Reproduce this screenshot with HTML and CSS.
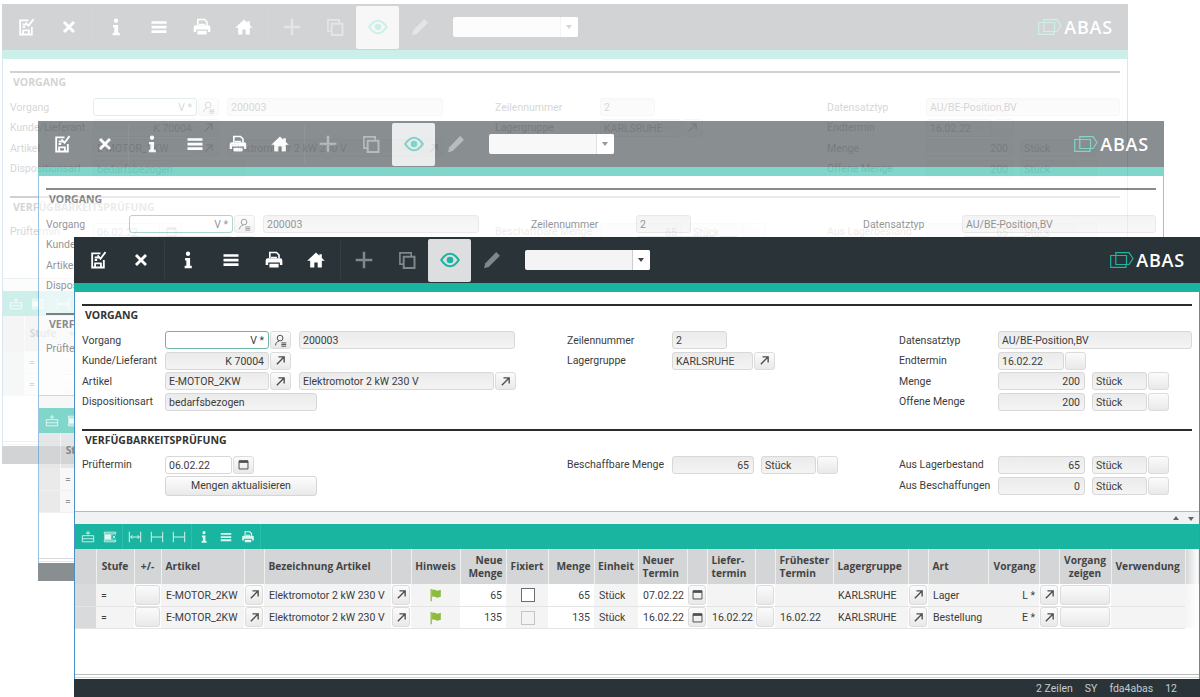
FILE: index.html
```html
<!DOCTYPE html>
<html lang="de">
<head>
  <meta charset="UTF-8">
  <meta name="viewport" content="width=device-width, initial-scale=1.0">
  <title>ABAS Verfügbarkeitsprüfung</title>
  <link rel="stylesheet" href="styles.css">
</head>
<body>
  <svg class="symbole" aria-hidden="true">
    <symbol id="i-speichern" viewBox="0 0 24 24"><path d="M15 4H5v17h14v-9M8.500 21v-5h7v5M8 9h5M8 12h3" fill="none" stroke="currentColor" stroke-width="2.200"/><path d="M11.500 6.500l3.500 4 6-8" fill="none" stroke="currentColor" stroke-width="2.200"/></symbol>
    <symbol id="i-x" viewBox="0 0 24 24"><path d="M6 6l12 12M18 6L6 18" stroke="currentColor" stroke-width="3.400" fill="none"/></symbol>
    <symbol id="i-info" viewBox="0 0 24 24"><circle cx="12" cy="4.500" r="2.600" fill="currentColor"/><path d="M8.500 9.500H14.500V19H16.500V22H8V19H10V12.500H8.500Z" fill="currentColor"/></symbol>
    <symbol id="i-liste" viewBox="0 0 24 24"><path d="M3 5h18v3.200H3zM3 10.500h18v3.200H3zM3 16h18v3.200H3z" fill="currentColor"/></symbol>
    <symbol id="i-druck" viewBox="0 0 24 24"><path d="M7 10V3h8l3 3v4M8.500 9h7" fill="none" stroke="currentColor" stroke-width="2"/><path d="M4.500 10h15a2.500 2.500 0 0 1 2.500 2.500V18h-3v-3H5v3H2v-5.500A2.500 2.500 0 0 1 4.500 10zM6.500 16.500h11V21h-11z" fill="currentColor"/></symbol>
    <symbol id="i-haus" viewBox="0 0 24 24"><path d="M12 3L1.500 13H5v8h5v-6h4v6h5v-8h3.500L19 9.700V5h-3v1.900z" fill="currentColor"/></symbol>
    <symbol id="i-plus" viewBox="0 0 24 24"><path d="M12 2v20M2 12h20" stroke="currentColor" stroke-width="3" fill="none"/></symbol>
    <symbol id="i-kopie" viewBox="0 0 24 24"><path d="M8 17H3.500V3.500H17V8" fill="none" stroke="currentColor" stroke-width="2"/><path d="M8 8h13v13.500H8z" fill="none" stroke="currentColor" stroke-width="2.400"/></symbol>
    <symbol id="i-auge" viewBox="0 0 24 24"><path d="M1.500 12C5 6.500 8.500 4.500 12 4.500s7 2 10.500 7.500C19 17.500 15.500 19.500 12 19.500S5 17.500 1.500 12z" fill="none" stroke="currentColor" stroke-width="2.600"/><circle cx="12" cy="12" r="4" fill="currentColor"/></symbol>
    <symbol id="i-stift" viewBox="0 0 24 24"><path d="M17 2.500l4.500 4.500L8 20.500 2.500 22 4 16z" fill="currentColor"/></symbol>
    <symbol id="i-logo" viewBox="0 0 24 16"><path d="M5.800 3.500H.7V15.300H16V12.500M5.800 3.500H16.500V12.500H5.800ZM5.800 3.500V.7H19L23 6.500 19 12.500H16.500" fill="none" stroke="currentColor" stroke-width="1.200"/></symbol>
    <symbol id="i-pfeil" viewBox="0 0 16 16"><path d="M3.500 12.500L12 4M5.500 3.500h7v7" fill="none" stroke="currentColor" stroke-width="1.700"/></symbol>
    <symbol id="i-suche" viewBox="0 0 16 16"><circle cx="7.500" cy="5" r="3.500" fill="none" stroke="currentColor" stroke-width="1.200"/><path d="M2 14c0-3 1.500-4.500 4-5M9 11h6M9 13h6M9 15h6" fill="none" stroke="currentColor" stroke-width="1.200"/></symbol>
    <symbol id="i-kalender" viewBox="0 0 16 16"><path d="M2.500 3.500h11v10h-11z" fill="none" stroke="currentColor" stroke-width="1.200"/><path d="M2.500 3h11v3h-11z" fill="currentColor"/></symbol>
    <symbol id="i-flagge" viewBox="0 0 16 16"><path d="M2.500 1v14" stroke="currentColor" stroke-width="1.500" fill="none"/><path d="M3.500 2c3-1 4.500 1 6 1s2.500-.5 4-1v8c-1.500 .5-2.500 1-4 1s-3-2-6-1z" fill="currentColor"/></symbol>
    <symbol id="i-zeile-neu" viewBox="0 0 16 16"><path d="M1.500 6.500h13v7h-13zM1.500 10h13M8 1v4.500M5.500 3.500h5" fill="none" stroke="currentColor" stroke-width="1"/></symbol>
    <symbol id="i-zeile-weg" viewBox="0 0 16 16"><path d="M1.500 2.500h13v2h-13zM1.500 11.500h13v2h-13z" fill="none" stroke="currentColor" stroke-width="1"/><path d="M1.500 5h8v6h-8z" fill="currentColor"/><path d="M11 6.500l3 3M14 6.500l-3 3" stroke="currentColor" stroke-width="1" fill="none"/></symbol>
    <symbol id="i-breit" viewBox="0 0 16 16"><path d="M1.500 2v12M14.500 2v12M3 8h10M5 6l-2 2 2 2M11 6l2 2-2 2" fill="none" stroke="currentColor" stroke-width="1.100"/></symbol>
    <symbol id="i-spalte" viewBox="0 0 16 16"><path d="M1.500 2v12M14.500 2v12M2 8h12" fill="none" stroke="currentColor" stroke-width="1.100"/></symbol>
  </svg>

  <div class="fenster vorne">
    <header class="kopf">
      <div class="werkzeuge">
        <span class="wz"><svg><use href="#i-speichern"/></svg></span>
        <span class="wz"><svg><use href="#i-x"/></svg></span>
        <span class="trenner"></span>
        <span class="wz"><svg><use href="#i-info"/></svg></span>
        <span class="wz"><svg><use href="#i-liste"/></svg></span>
        <span class="wz"><svg><use href="#i-druck"/></svg></span>
        <span class="wz"><svg><use href="#i-haus"/></svg></span>
        <span class="trenner"></span>
        <span class="wz grau"><svg><use href="#i-plus"/></svg></span>
        <span class="wz grau"><svg><use href="#i-kopie"/></svg></span>
        <span class="wz aktiv"><svg><use href="#i-auge"/></svg></span>
        <span class="wz grau"><svg><use href="#i-stift"/></svg></span>
        <div class="auswahl"><span class="auswahl-pfeil"></span></div>
      </div>
      <div class="logo"><svg><use href="#i-logo"/></svg><span>ABAS</span></div>
    </header>
    <div class="akzent"></div>

    <div class="inhalt">
      <div class="maske">
        <section class="abschnitt erster">
          <h2>VORGANG</h2>
          <div class="spalten">
            <div class="spalte s1">
              <div class="zeile"><label>Vorgang</label><div class="feld aktiv-feld rechts b104">V *</div><span class="knopf"><svg><use href="#i-suche"/></svg></span><div class="feld b216 abstand">200003</div></div>
              <div class="zeile"><label>Kunde/Lieferant</label><div class="feld rechts b104">K 70004</div><span class="knopf"><svg><use href="#i-pfeil"/></svg></span></div>
              <div class="zeile"><label>Artikel</label><div class="feld b104">E-MOTOR_2KW</div><span class="knopf"><svg><use href="#i-pfeil"/></svg></span><div class="feld b195 abstand">Elektromotor 2 kW 230 V</div><span class="knopf"><svg><use href="#i-pfeil"/></svg></span></div>
              <div class="zeile"><label>Dispositionsart</label><div class="feld b152">bedarfsbezogen</div></div>
            </div>
            <div class="spalte s2">
              <div class="zeile"><label>Zeilennummer</label><div class="feld b55">2</div></div>
              <div class="zeile"><label>Lagergruppe</label><div class="feld b81">KARLSRUHE</div><span class="knopf"><svg><use href="#i-pfeil"/></svg></span></div>
            </div>
            <div class="spalte s3">
              <div class="zeile"><label>Datensatztyp</label><div class="feld b194">AU/BE-Position,BV</div></div>
              <div class="zeile"><label>Endtermin</label><div class="feld b66">16.02.22</div><span class="knopf"></span></div>
              <div class="zeile"><label>Menge</label><div class="feld rechts b87">200</div><div class="feld b55 abstand-k">Stück</div><span class="knopf"></span></div>
              <div class="zeile"><label>Offene Menge</label><div class="feld rechts b87">200</div><div class="feld b55 abstand-k">Stück</div><span class="knopf"></span></div>
            </div>
          </div>
        </section>
        <section class="abschnitt pruefung">
          <h2>VERFÜGBARKEITSPRÜFUNG</h2>
          <div class="spalten">
            <div class="spalte s1">
              <div class="zeile"><label>Prüftermin</label><div class="feld weiss b67">06.02.22</div><span class="knopf"><svg><use href="#i-kalender"/></svg></span></div>
              <div class="zeile"><label></label><div class="breit-knopf">Mengen aktualisieren</div></div>
            </div>
            <div class="spalte s2">
              <div class="zeile"><label>Beschaffbare Menge</label><div class="feld rechts b82">65</div><div class="feld b55 abstand-k">Stück</div><span class="knopf"></span></div>
            </div>
            <div class="spalte s3">
              <div class="zeile"><label>Aus Lagerbestand</label><div class="feld rechts b87">65</div><div class="feld b55 abstand-k">Stück</div><span class="knopf"></span></div>
              <div class="zeile"><label>Aus Beschaffungen</label><div class="feld rechts b87">0</div><div class="feld b55 abstand-k">Stück</div><span class="knopf"></span></div>
            </div>
          </div>
        </section>
      </div>

      <div class="leiste"><span class="dreieck hoch"></span><span class="dreieck runter"></span></div>

      <div class="tabellen-werkzeuge">
        <span class="twz"><svg><use href="#i-zeile-neu"/></svg></span>
        <span class="twz"><svg><use href="#i-zeile-weg"/></svg></span>
        <span class="t-trenner"></span>
        <span class="twz"><svg><use href="#i-breit"/></svg></span>
        <span class="twz"><svg><use href="#i-spalte"/></svg></span>
        <span class="twz"><svg><use href="#i-spalte"/></svg></span>
        <span class="t-trenner"></span>
        <span class="twz"><svg><use href="#i-info"/></svg></span>
        <span class="twz"><svg><use href="#i-liste"/></svg></span>
        <span class="twz"><svg><use href="#i-druck"/></svg></span>
        <span class="t-trenner"></span>
      </div>

      <table class="tabelle">
        <colgroup>
          <col style="width:21px"><col style="width:38px"><col style="width:27px"><col style="width:83px"><col style="width:20px"><col style="width:127px"><col style="width:20px"><col style="width:49px"><col style="width:46px"><col style="width:42px"><col style="width:46px"><col style="width:44px"><col style="width:49px"><col style="width:20px"><col style="width:48px"><col style="width:20px"><col style="width:58px"><col style="width:75px"><col style="width:20px"><col style="width:60px"><col style="width:51px"><col style="width:20px"><col style="width:52px"><col style="width:74px"><col>
        </colgroup>
        <thead>
          <tr>
            <th></th><th>Stufe</th><th>+/-</th><th class="li">Artikel</th><th></th><th class="li">Bezeichnung Artikel</th><th></th><th>Hinweis</th><th class="re">Neue<br>Menge</th><th>Fixiert</th><th class="re">Menge</th><th>Einheit</th><th class="li">Neuer<br>Termin</th><th></th><th class="li">Liefer-<br>termin</th><th></th><th class="li">Frühester<br>Termin</th><th class="li">Lagergruppe</th><th></th><th class="li">Art</th><th class="re">Vorgang</th><th></th><th>Vorgang<br>zeigen</th><th class="li">Verwendung</th><th class="rest"></th>
          </tr>
        </thead>
        <tbody>
          <tr>
            <td class="stub"></td><td>=</td><td class="kn"><span class="knopf voll"></span></td><td>E-MOTOR_2KW</td><td class="kn"><span class="knopf voll"><svg><use href="#i-pfeil"/></svg></span></td><td>Elektromotor 2 kW 230 V</td><td class="kn"><span class="knopf voll"><svg><use href="#i-pfeil"/></svg></span></td><td class="mi flagge"><svg><use href="#i-flagge"/></svg></td><td class="re ed">65</td><td class="mi"><span class="haken"></span></td><td class="re ed">65</td><td>Stück</td><td class="ed">07.02.22</td><td class="kn"><span class="knopf voll"><svg><use href="#i-kalender"/></svg></span></td><td></td><td class="kn"><span class="knopf voll"></span></td><td></td><td>KARLSRUHE</td><td class="kn"><span class="knopf voll"><svg><use href="#i-pfeil"/></svg></span></td><td>Lager</td><td class="re">L *</td><td class="kn"><span class="knopf voll"><svg><use href="#i-pfeil"/></svg></span></td><td class="kn"><span class="knopf voll"></span></td><td></td><td class="rest"></td>
          </tr>
          <tr>
            <td class="stub"></td><td>=</td><td class="kn"><span class="knopf voll"></span></td><td>E-MOTOR_2KW</td><td class="kn"><span class="knopf voll"><svg><use href="#i-pfeil"/></svg></span></td><td>Elektromotor 2 kW 230 V</td><td class="kn"><span class="knopf voll"><svg><use href="#i-pfeil"/></svg></span></td><td class="mi flagge"><svg><use href="#i-flagge"/></svg></td><td class="re ed">135</td><td class="mi"><span class="haken aus"></span></td><td class="re ed">135</td><td>Stück</td><td class="ed">16.02.22</td><td class="kn"><span class="knopf voll"><svg><use href="#i-kalender"/></svg></span></td><td>16.02.22</td><td class="kn"><span class="knopf voll"></span></td><td>16.02.22</td><td>KARLSRUHE</td><td class="kn"><span class="knopf voll"><svg><use href="#i-pfeil"/></svg></span></td><td>Bestellung</td><td class="re">E *</td><td class="kn"><span class="knopf voll"><svg><use href="#i-pfeil"/></svg></span></td><td class="kn"><span class="knopf voll"></span></td><td></td><td class="rest"></td>
          </tr>
        </tbody>
      </table>
    </div>

    <footer class="fuss">
      <span>2 Zeilen</span><span>SY</span><span>fda4abas</span><span>12</span>
    </footer>
  </div>

  <script src="script.js"></script>
</body>
</html>
```

FILE: styles.css
```css
/* Desktop */
html, body {
  margin: 0;
  height: 100%;
  overflow: hidden;
  background: #fff;
}

body {
  font-family: Roboto, sans-serif;
  font-size: 10.500px;
  color: #3c3c3c;
}

.symbole {
  display: none;
}

/* Die drei gestapelten Fenster */
.fenster {
  position: absolute;
  width: 1126px;
  height: 460px;
  display: flex;
  flex-direction: column;
  background: #fff;
}

.vorne {
  left: 74px;
  top: 237px;
}

.mitte {
  left: 38px;
  top: 121px;
  opacity: 0.55;
}

.hinten {
  left: 2px;
  top: 4px;
  opacity: 0.21;
}

/* Kopf */
.kopf {
  height: 46px;
  flex: none;
  display: flex;
  align-items: center;
  justify-content: space-between;
  background: #2a3338;
  color: #fff;
}

.werkzeuge {
  display: flex;
  align-items: center;
  height: 100%;
  padding-left: 3px;
}

.wz {
  width: 42.600px;
  height: 43px;
  display: flex;
  align-items: center;
  justify-content: center;
  border-radius: 2px;
}

.wz svg {
  width: 20px;
  height: 20px;
}

.wz.grau {
  color: #7f878b;
}

.wz.aktiv {
  background: #dcdedf;
  color: #1ab5a0;
}

.trenner {
  width: 1px;
  height: 38px;
  margin: 0 2px;
  background: #353e43;
}

.trenner + .wz.grau {
  margin-left: 0.500px;
}

.auswahl {
  width: 125px;
  height: 20px;
  margin-left: 12px;
  display: flex;
  justify-content: flex-end;
  background: #f4f4f4;
  border-radius: 2px;
}

.auswahl-pfeil {
  width: 17px;
  position: relative;
  border-left: 1px solid #ccc;
  background: #fff;
  border-radius: 0 2px 2px 0;
}

.auswahl-pfeil::after {
  content: "";
  position: absolute;
  left: 5px;
  top: 8px;
  border: 3.500px solid transparent;
  border-top: 4px solid #444;
}

.logo {
  display: flex;
  align-items: center;
  gap: 2px;
  padding-right: 15px;
}

.logo svg {
  width: 24px;
  height: 16px;
  color: #1fb5a0;
}

.logo span {
  font-family: 'Open Sans', sans-serif;
  font-size: 18px;
  font-weight: 600;
  letter-spacing: 0.8px;
  line-height: 20px;
}

.akzent {
  height: 9px;
  flex: none;
  background: #1ab5a0;
}

/* Inhalt */
.inhalt {
  position: relative;
  flex: 1;
  min-height: 0;
  display: flex;
  flex-direction: column;
  border-left: 1px solid #4a90c8;
  border-right: 1px solid #4a90c8;
}

.inhalt::after {
  content: "";
  position: absolute;
  left: 0;
  right: 0;
  bottom: 1px;
  height: 2px;
  border-top: 1px solid #b9bdc0;
  border-bottom: 1px solid #d4d7d9;
}

.maske {
  height: 219px;
  flex: none;
  box-sizing: border-box;
  padding: 12px 7px 0;
}

.abschnitt {
  border-top: 2px solid #2c2c2c;
  margin-top: 18px;
}

.abschnitt.erster {
  margin-top: 0;
}

.abschnitt h2 {
  margin: 0 0 7px 3px;
  font-family: 'Open Sans', sans-serif;
  font-size: 10.500px;
  line-height: 18px;
  font-weight: 700;
  color: #333;
}

.spalten {
  display: grid;
  grid-template-columns: 485px 332px 1fr;
}

.spalte {
  display: flex;
  flex-direction: column;
  gap: 2.500px;
}

.pruefung .spalte {
  gap: 3px;
}

.zeile {
  display: flex;
  align-items: center;
  height: 18px;
}

.zeile label {
  flex: none;
  white-space: nowrap;
}

.s1 label { width: 83px; }
.s2 label { width: 105px; }
.s3 label { width: 99px; }

.feld {
  box-sizing: border-box;
  height: 18px;
  line-height: 17px;
  padding: 0 3px;
  flex: none;
  border: 1px solid #d8d8d8;
  border-radius: 3px;
  background: linear-gradient(#ebebeb, #f4f4f4);
  white-space: nowrap;
  overflow: hidden;
}

.feld.rechts {
  text-align: right;
  padding-right: 4px;
}

.feld.weiss {
  background: #fff;
}

.feld.aktiv-feld {
  background: #fff;
  border-color: #6fb5a6;
}

.abstand { margin-left: 8px; }
.abstand-k { margin-left: 7px; }

.b55 { width: 55px; }
.b66 { width: 66px; }
.b67 { width: 67px; }
.b81 { width: 81px; }
.b82 { width: 82px; }
.b87 { width: 87px; }
.b104 { width: 104px; }
.b152 { width: 152px; }
.b194 { width: 194px; }
.b195 { width: 195px; }
.b216 { width: 216px; }

.knopf {
  box-sizing: border-box;
  width: 21px;
  height: 18px;
  flex: none;
  margin-left: 1px;
  display: flex;
  align-items: center;
  justify-content: center;
  color: #4e4e4e;
  border: 1px solid #dcdcdc;
  border-radius: 3px;
  background: linear-gradient(#fbfbfb, #e9e9e9);
}

.knopf svg {
  width: 13px;
  height: 13px;
}

.breit-knopf {
  box-sizing: border-box;
  width: 152px;
  height: 20px;
  line-height: 18px;
  text-align: center;
  border: 1px solid #d6d6d6;
  border-radius: 3px;
  background: linear-gradient(#fdfdfd, #e9e9e9);
}

/* Leiste über der Tabelle */
.leiste {
  height: 12px;
  flex: none;
  display: flex;
  justify-content: flex-end;
  align-items: center;
  gap: 9px;
  padding-right: 5px;
  border-top: 1px solid #b4b9bc;
  background: #f1f2f4;
}

.dreieck {
  border: 3.500px solid transparent;
}

.dreieck.hoch {
  border-bottom: 4px solid #666;
  margin-top: -4px;
}

.dreieck.runter {
  border-top: 4px solid #666;
  margin-top: 4px;
}

.tabellen-werkzeuge {
  height: 25px;
  flex: none;
  display: flex;
  align-items: center;
  padding-left: 1.500px;
  background: #1ab5a0;
  color: #dff5f1;
}

.twz {
  width: 22px;
  display: flex;
  justify-content: center;
}

.twz svg {
  width: 14px;
  height: 14px;
}

.t-trenner {
  width: 1px;
  height: 25px;
  margin: 0 1px;
  background: #2cc0ab;
}

/* Tabelle */
.tabelle {
  table-layout: fixed;
  width: 100%;
  flex: none;
  border-collapse: collapse;
}

.tabelle th {
  height: 35px;
  padding: 0 3px;
  box-sizing: border-box;
  background: #d3d5d6;
  border-right: 1px solid #eef0f0;
  font-family: 'Open Sans', sans-serif;
  font-size: 10.200px;
  line-height: 13px;
  font-weight: 700;
  color: #444;
  text-align: center;
  white-space: nowrap;
}

.tabelle th.li { text-align: left; padding-left: 4px; }
.tabelle th.re { text-align: right; }

.tabelle th.rest {
  background: linear-gradient(90deg, #d3d5d6, #fff);
  border-right: none;
}

.tabelle td {
  height: 22px;
  padding: 1px 4px 0 5px;
  box-sizing: border-box;
  background: #f4f4f4;
  border-bottom: 1px solid #e4e4e4;
  white-space: nowrap;
  overflow: hidden;
}

.tabelle td.stub {
  background: #d9dadb;
}

.tabelle td.re { text-align: right; }
.tabelle td.mi { text-align: center; }
.tabelle td.ed { background: #fff; }

.tabelle td.kn {
  padding: 0 1px;
  background: #fff;
}

.tabelle td.rest {
  background: linear-gradient(90deg, #f4f4f4, #fff);
  border-bottom: none;
}

.knopf.voll {
  width: 100%;
  height: 20px;
  margin: 0;
}

.flagge svg {
  width: 14px;
  height: 14px;
  color: #8dbb3c;
  vertical-align: middle;
}

.haken {
  display: inline-block;
  width: 12px;
  height: 12px;
  vertical-align: middle;
  background: #fff;
  border: 1px solid #6e6e6e;
}

.haken.aus {
  background: #f3f3f3;
  border-color: #c4c4c4;
}

/* Fuß */
.fuss {
  height: 18px;
  margin-top: auto;
  flex: none;
  display: flex;
  justify-content: flex-end;
  align-items: center;
  gap: 12px;
  padding-right: 23px;
  background: #2a3338;
  color: #c6ccd0;
}
```

FILE: script.js
```js
// Die hinteren Fenster sind Kopien des vorderen
const vorne = document.querySelector('.fenster');

['hinten', 'mitte'].forEach(name => {
  const kopie = vorne.cloneNode(true);
  kopie.classList.remove('vorne');
  kopie.classList.add(name);
  vorne.before(kopie);
});
```
